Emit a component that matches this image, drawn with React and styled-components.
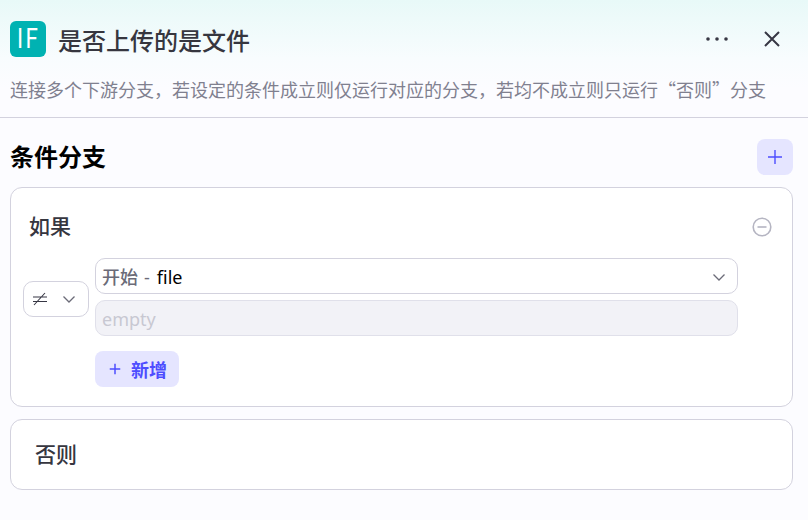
import React from "react";
import styled, { createGlobalStyle } from "styled-components";

const Global = createGlobalStyle`
  html, body { margin: 0; padding: 0; background: #fcfcff; }
  body { font-family: "Noto Sans", "Noto Sans CJK SC", sans-serif; }
`;
const Page = styled.div`
  width: 808px; height: 520px; overflow: hidden; box-sizing: border-box;
  background: #fcfcff; display: flex; flex-direction: column;
`;
const Header = styled.header`
  height: 118px; box-sizing: border-box; flex: none;
  background: linear-gradient(180deg, #e8f9f8 0%, #f8fcfe 50%, #fcfcff 75%);
  border-bottom: 1px solid #d3d2de; padding: 21px 27px 0 10px;
`;
const TitleRow = styled.div`display: flex; align-items: center; height: 36px;`;
const Logo = styled.div`
  width: 36px; height: 36px; border-radius: 6px; background: #00b2b2; color: #fff;
  display: flex; align-items: center; justify-content: center; flex: none;
  font: 400 28px/36px Roboto, "Noto Sans", sans-serif;
`;
const LogoText = styled.span`display: inline-block; transform: scaleX(0.8); letter-spacing: 3px; margin-right: -2px;`;
const Title = styled.h1`
  margin: 2px 0 0 12px; flex: 1; font-size: 24px; line-height: 36px; font-weight: 500; color: #36363f;
  font-family: "Noto Sans CJK SC", sans-serif;
`;
const IconButton = styled.span`display: flex; color: #373744; margin-left: ${p => p.$gap || 0}px;`;
const Description = styled.p`
  margin: 19px 0 0; font-size: 18px; line-height: 26px; color: #80808f; white-space: nowrap;
  font-family: "Noto Sans CJK SC", sans-serif;
`;
const Body = styled.main`padding: 21px 15px 0 10px; display: flex; flex-direction: column;`;
const SectionHead = styled.div`display: flex; align-items: center; justify-content: space-between; height: 36px;`;
const SectionTitle = styled.h2`
  margin: 0 0 2px; font-size: 24px; line-height: 34px; font-weight: 700; color: #000; font-family: "Noto Sans CJK SC", sans-serif;
`;
const AddSquare = styled.div`
  width: 36px; height: 36px; border-radius: 8px; background: #e5e5ff; color: #4d4dff;
  display: flex; align-items: center; justify-content: center;
`;
const Card = styled.section`
  background: #fff; border: 1px solid #d3d2de; border-radius: 12px; box-sizing: border-box;
`;
const IfCard = styled(Card)`height: 220px; margin-top: 12px; padding: 24px 20px 0 12px;`;
const ElseCard = styled(Card)`
  height: 71px; margin-top: 12px; padding: 0 24px 4px; display: flex; align-items: center;
  font: 500 21px/28px "Noto Sans CJK SC", sans-serif; color: #36363f;
`;
const IfHead = styled.div`
  display: flex; align-items: center; justify-content: space-between; height: 30px; padding-left: 6px;
  font: 500 21px/26px "Noto Sans CJK SC", sans-serif; color: #36363f;
`;
const IfLabel = styled.span`margin-bottom: 4px;`;
const Condition = styled.div`display: flex; align-items: center; gap: 6px; margin-top: 16px;`;
const OpSelect = styled.div`
  width: 66px; height: 36px; box-sizing: border-box; border: 1px solid #d3d2de; border-radius: 10px; background: #fff;
  display: flex; align-items: center; justify-content: space-between; padding: 0 12px 0 8px; color: #373744; flex: none;
  margin-top: 4px;
`;
const Fields = styled.div`width: 643px; display: flex; flex-direction: column; gap: 6px;`;
const Field = styled.div`
  height: 36px; box-sizing: border-box; border: 1px solid ${p => p.$muted ? "#e0e0ea" : "#d3d2de"};
  border-radius: 10px; background: ${p => p.$muted ? "#f2f2f7" : "#fff"};
  display: flex; align-items: center; justify-content: space-between; padding: 2px 11px 0 6px;
  font: 400 18px/24px "Noto Sans", "Noto Sans CJK SC", sans-serif; color: ${p => p.$muted ? "#c8c8d2" : "#000"};
`;
const Grey = styled.span`color: #6b6b78; font-weight: 500;`;
const Dash = styled.span`color: #6b6b78; margin: 0 7px 0 6px;`;
const AddRow = styled.div`margin: 15px 0 0 72px;`;
const AddButton = styled.button`
  width: 84px; height: 36px; border: 0; border-radius: 8px; background: #e5e5ff; color: #4d4dff;
  display: flex; align-items: center; justify-content: center; gap: 10px; padding: 0 0 0 2px;
  font: 700 18px/24px "Noto Sans CJK SC", sans-serif;
`;

const Plus = ({ s = 16, w = 1.4 }) => (
  <svg width={s} height={s} viewBox="0 0 16 16" fill="none" stroke="currentColor" strokeWidth={w}><path d="M8 1v14M1 8h14" /></svg>
);
const Chevron = () => (
  <svg width="14" height="14" viewBox="0 0 14 14" fill="none" stroke="#6b6b78" strokeWidth="1.3"><path d="M1.5 4.5 7 10l5.5-5.5" /></svg>
);

export default function App() {
  return (
    <Page>
      <Global />
      <Header>
        <TitleRow>
          <Logo><LogoText>IF</LogoText></Logo>
          <Title>是否上传的是文件</Title>
          <IconButton>
            <svg width="24" height="6" viewBox="0 0 24 6" fill="currentColor"><circle cx="3" cy="3" r="1.8" /><circle cx="12" cy="3" r="1.8" /><circle cx="21" cy="3" r="1.8" /></svg>
          </IconButton>
          <IconButton $gap={34}>
            <svg width="18" height="18" viewBox="0 0 18 18" fill="none" stroke="currentColor" strokeWidth="2"><path d="M2 2l14 14M16 2 2 16" /></svg>
          </IconButton>
        </TitleRow>
        <Description>连接多个下游分支，若设定的条件成立则仅运行对应的分支，若均不成立则只运行“否则”分支</Description>
      </Header>
      <Body>
        <SectionHead>
          <SectionTitle>条件分支</SectionTitle>
          <AddSquare><Plus /></AddSquare>
        </SectionHead>
        <IfCard>
          <IfHead>
            <IfLabel>如果</IfLabel>
            <svg width="20" height="20" viewBox="0 0 20 20" fill="none" stroke="#b5b5c2" strokeWidth="1.6"><circle cx="10" cy="10" r="8.8" /><path d="M5.5 10h9" /></svg>
          </IfHead>
          <Condition>
            <OpSelect>
              <svg width="16" height="14" viewBox="0 0 16 14" fill="none" stroke="currentColor" strokeWidth="1.1"><path d="M1 5h14M1 9.5h14M13 1 2 13" /></svg>
              <Chevron />
            </OpSelect>
            <Fields>
              <Field>
                <span><Grey>开始</Grey><Dash>-</Dash>file</span>
                <Chevron />
              </Field>
              <Field $muted>empty</Field>
            </Fields>
          </Condition>
          <AddRow>
            <AddButton><Plus s={12} w={2} />新增</AddButton>
          </AddRow>
        </IfCard>
        <ElseCard>否则</ElseCard>
      </Body>
    </Page>
  );
}
